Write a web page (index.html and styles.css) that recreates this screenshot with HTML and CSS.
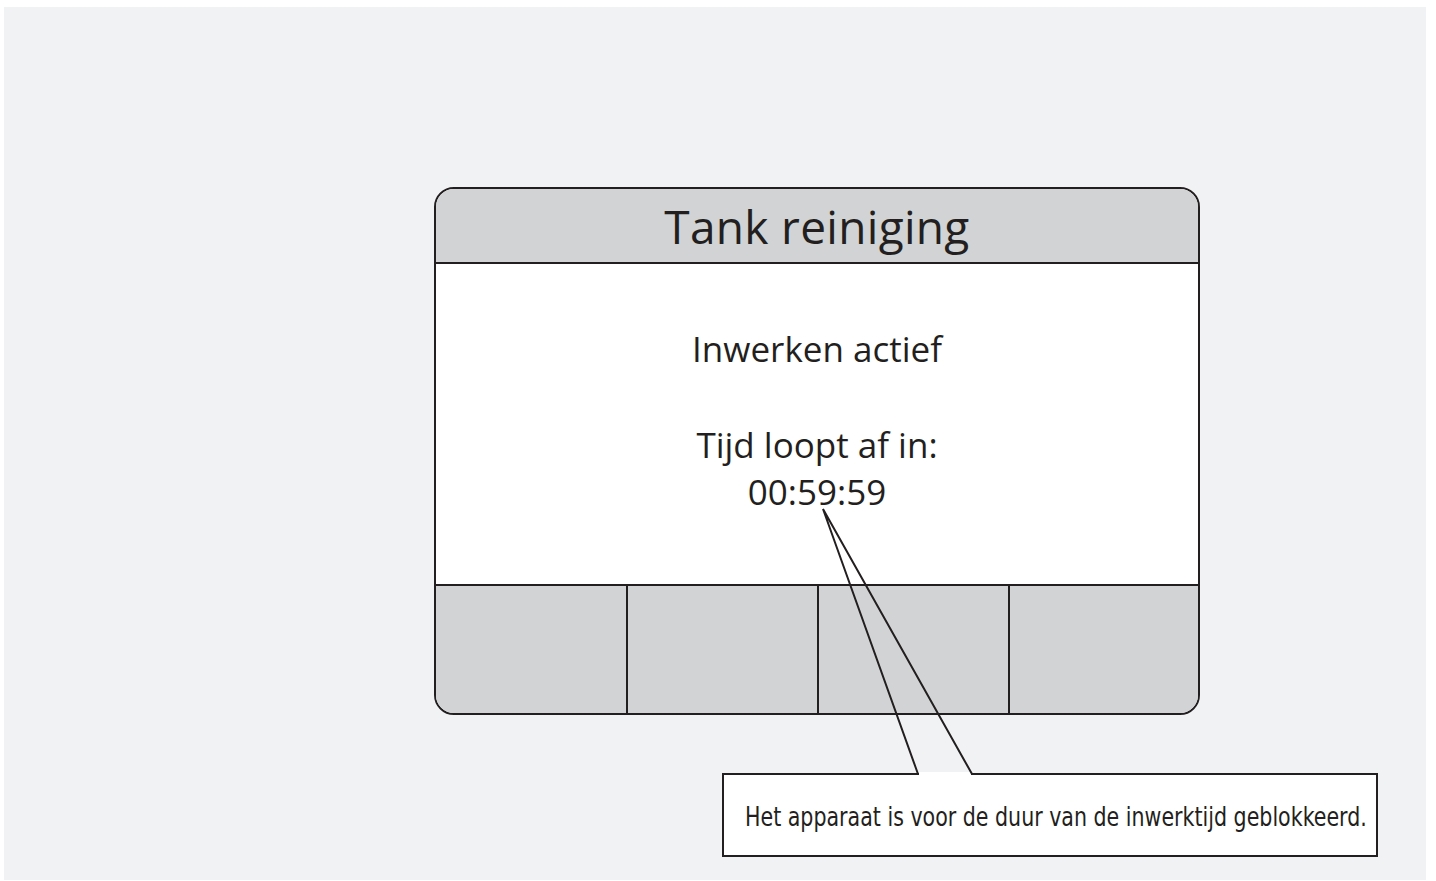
FILE: index.html
```html
<!DOCTYPE html>
<html>
<head>
<meta charset="UTF-8">
<title>Tank reiniging</title>
<link rel="stylesheet" href="styles.css">
</head>
<body>
<div class="screen">
	<div class="device">
		<div class="device-head">Tank reiniging</div>
		<div class="device-body">
			<p class="status">Inwerken actief</p>
			<p class="timer-label">Tijd loopt af in:</p>
			<p class="timer">00:59:59</p>
		</div>
		<div class="device-keys">
			<div class="key"></div>
			<div class="key"></div>
			<div class="key"></div>
			<div class="key"></div>
		</div>
	</div>

	<div class="callout"><span class="callout-text">Het apparaat is voor de duur van de inwerktijd geblokkeerd.</span></div>
	<svg class="pointer" width="1422" height="873" viewBox="0 0 1422 873">
		<rect x="915" y="765" width="52" height="3" fill="#ffffff"/>
		<polyline points="914,767 819,502 968,767" fill="none" stroke="#231f20" stroke-width="2" stroke-linejoin="miter"/>
	</svg>
</div>
</body>
</html>
```

FILE: styles.css
```css
body
{
	margin: 0;
	background-color: #ffffff;
	font-family: "Open Sans", "Noto Sans", sans-serif;
	color: #231f20;
}

.screen
{
	position: relative;
	margin: 7px 10px 1px 4px;
	height: 873px;
	padding-top: 180px;
	box-sizing: border-box;
	background-color: #f1f2f4;
}

.device
{
	margin-left: 430px;
	width: 766px;
	height: 528px;
	box-sizing: border-box;
	border: 2px solid #231f20;
	border-radius: 20px;
	overflow: hidden;
	display: flex;
	flex-direction: column;
}

.device-head
{
	height: 75px;
	padding-top: 2px;
	box-sizing: border-box;
	line-height: 71px;
	border-bottom: 2px solid #231f20;
	background-color: #d1d3d4;
	text-align: center;
	font-size: 46px;
	letter-spacing: 0.3px;
}

.device-body
{
	height: 322px;
	padding-top: 61px;
	box-sizing: border-box;
	border-bottom: 2px solid #231f20;
	background-color: #ffffff;
	text-align: center;
	font-size: 35px;
	line-height: 47px;
}

.device-body p
{
	margin: 0;
}

.timer-label
{
	margin-top: 49px !important;
}

.device-keys
{
	flex: 1;
	display: grid;
	grid-template-columns: 192px 191px 191px 1fr;
	background-color: #d1d3d4;
}

.key
{
	border-right: 2px solid #231f20;
}

.key:last-child
{
	border-right: none;
}

.callout
{
	position: absolute;
	left: 718px;
	top: 766px;
	width: 656px;
	height: 84px;
	box-sizing: border-box;
	border: 2px solid #231f20;
	background-color: #ffffff;
	padding: 4px 0 0 21px;
	display: flex;
	align-items: center;
	font-family: "DejaVu Sans Condensed", "DejaVu Sans", sans-serif;
	font-size: 26px;
	white-space: nowrap;
}

.callout-text
{
	display: inline-block;
	transform: scaleX(0.88);
	transform-origin: left center;
}

.pointer
{
	position: absolute;
	left: 0;
	top: 0;
	pointer-events: none;
}
```
